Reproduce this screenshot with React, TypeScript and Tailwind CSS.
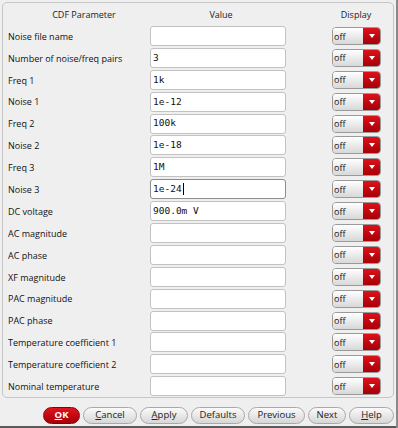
import React from "react";

const rows: [string, string][] = [
  ["Noise file name", ""],
  ["Number of noise/freq pairs", "3"],
  ["Freq 1", "1k"],
  ["Noise 1", "1e-12"],
  ["Freq 2", "100k"],
  ["Noise 2", "1e-18"],
  ["Freq 3", "1M"],
  ["Noise 3", "1e-24"],
  ["DC voltage", "900.0m V"],
  ["AC magnitude", ""],
  ["AC phase", ""],
  ["XF magnitude", ""],
  ["PAC magnitude", ""],
  ["PAC phase", ""],
  ["Temperature coefficient 1", ""],
  ["Temperature coefficient 2", ""],
  ["Nominal temperature", ""],
];

function Dropdown() {
  return (
    <div className="flex h-[18px] w-[49px] overflow-hidden rounded-[4px] border border-[#9a9a9a]">
      <div className="flex flex-1 items-center bg-gradient-to-b from-[#ffffff] to-[#d8d8d8] pl-[1px] text-[9px] leading-none text-[#111]">
        off
      </div>
      <div className="flex w-[17px] items-center justify-center bg-gradient-to-b from-[#dc121a] to-[#a80008]">
        <svg width="6" height="4" viewBox="0 0 6 4">
          <path d="M0 0 L6 0 L3 4 Z" fill="#fff" />
        </svg>
      </div>
    </div>
  );
}

function Btn({ label, u, w, red }: { label: string; u?: number; w: string; red?: boolean }) {
  const text =
    u === undefined ? (
      label
    ) : (
      <>
        {label.slice(0, u)}
        <span className="underline">{label[u]}</span>
        {label.slice(u + 1)}
      </>
    );
  return (
    <div
      className={
        red
          ? `${w} flex h-[17px] items-center justify-center rounded-full border border-[#8a0006] bg-gradient-to-b from-[#e0141c] to-[#a80008] text-[9.5px] font-bold text-white`
          : `${w} flex h-[17px] items-center justify-center rounded-full border border-[#a8a8a8] bg-gradient-to-b from-[#fbfbfb] to-[#d6d6d6] text-[9.5px] text-[#222]`
      }
    >
      {text}
    </div>
  );
}

export default function App() {
  return (
    <div
      className="relative h-[428px] w-[398px] bg-[#efefef]"
      style={{ fontFamily: '"Open Sans", "Noto Sans", sans-serif' }}
    >
      <div className="absolute left-[2px] top-[2px] h-[396px] w-[392px] rounded-[5px] border border-[#c6c6c6]">
        <div className="flex h-[23px] items-center text-[9px] text-[#222]">
          <div className="w-[162px] pt-[1px] text-center">CDF Parameter</div>
          <div className="w-[112px] text-center">Value</div>
          <div className="flex-1 pl-[42px] text-center">Display</div>
        </div>
        <div className="flex flex-col">
          {rows.map(([label, value], i) => (
            <div key={i} className="flex h-[21.9px] items-start">
              <div className="flex h-[20px] w-[147px] items-center pl-[5px] pt-[1px] text-[9px] text-[#111]">
                {label}
              </div>
              <div
                className={`flex h-[20px] w-[136px] items-center rounded-[3px] border bg-white pl-[2px] text-[9.5px] text-[#111] ${
                  i === 7 ? "border-[#8c8c8c]" : "border-[#c2c2c2]"
                }`}
                style={{ fontFamily: '"DejaVu Sans Mono", monospace' }}
              >
                {value}
                {i === 7 && <span className="ml-[1px] inline-block h-[12px] w-[1px] bg-black" />}
              </div>
              <div className="ml-[46px] flex h-[20px] items-center">
                <Dropdown />
              </div>
            </div>
          ))}
        </div>
      </div>
      <div className="absolute left-0 top-[407px] flex w-full gap-[3px] pl-[43px]">
        <Btn label="OK" u={0} w="w-[37px]" red />
        <Btn label="Cancel" u={0} w="w-[54px]" />
        <Btn label="Apply" u={0} w="w-[48px]" />
        <Btn label="Defaults" w="w-[54px]" />
        <Btn label="Previous" w="w-[57px]" />
        <Btn label="Next" w="w-[38px]" />
        <Btn label="Help" u={0} w="w-[45px]" />
      </div>
      <div className="absolute bottom-0 left-0 h-[2px] w-full bg-[#5a5a5a]" />
      <div className="absolute right-0 top-0 h-full w-[2px] bg-[#8a8a8a]" />
    </div>
  );
}
